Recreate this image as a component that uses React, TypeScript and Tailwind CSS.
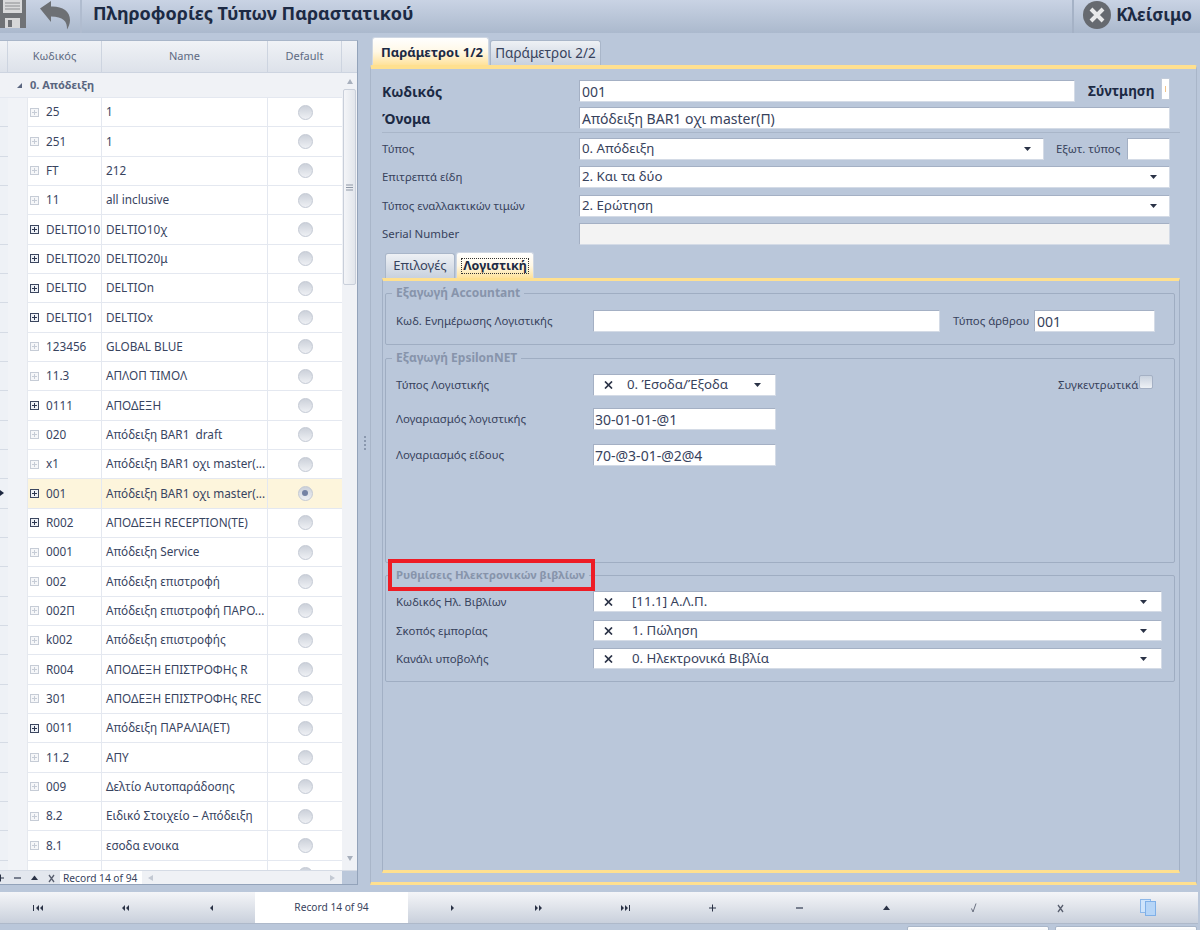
import React from "react";

const rows: [string, string, boolean][] = [
  ["25", "1", false],
  ["251", "1", false],
  ["FT", "212", false],
  ["11", "all inclusive", false],
  ["DELTIO10", "DELTIO10χ", true],
  ["DELTIO20", "DELTIO20μ", true],
  ["DELTIO", "DELTIOn", true],
  ["DELTIO1", "DELTIOx", true],
  ["123456", "GLOBAL BLUE", false],
  ["11.3", "ΑΠΛΟΠ ΤΙΜΟΛ", false],
  ["0111", "ΑΠΟΔΕΞΗ", true],
  ["020", "Απόδειξη BAR1  draft", false],
  ["x1", "Απόδειξη BAR1 οχι master(...", false],
  ["001", "Απόδειξη BAR1 οχι master(...", true],
  ["R002", "ΑΠΟΔΕΞΗ RECEPTION(ΤΕ)", true],
  ["0001", "Απόδειξη Service", false],
  ["002", "Απόδειξη επιστροφή", false],
  ["002Π", "Απόδειξη επιστροφή ΠΑΡΟ...", false],
  ["k002", "Απόδειξη επιστροφής", false],
  ["R004", "ΑΠΟΔΕΞΗ ΕΠΙΣΤΡΟΦΗς R", false],
  ["301", "ΑΠΟΔΕΞΗ ΕΠΙΣΤΡΟΦΗς REC", false],
  ["0011", "Απόδειξη ΠΑΡΑΛΙΑ(ΕΤ)", true],
  ["11.2", "ΑΠΥ", false],
  ["009", "Δελτίο Αυτοπαράδοσης", false],
  ["8.2", "Ειδικό Στοιχείο – Απόδειξη", false],
  ["8.1", "εσοδα ενοικα", false],
  ["100", "ΠΙΣΤΩΤΙΚΗ ΑΠΟΔΕΙΞΗ", false],
];

function Expander({ dark }: { dark: boolean }) {
  return (
    <svg width="9" height="9" viewBox="0 0 9 9" className="shrink-0">
      <rect x="0.5" y="0.5" width="8" height="8" fill={dark ? "#eef1f6" : "#f6f7f9"} stroke={dark ? "#3c4760" : "#c6ccd6"} />
      <path d="M2 4.5h5M4.5 2v5" stroke={dark ? "#2c3650" : "#c6ccd6"} />
    </svg>
  );
}

function Radio({ on }: { on: boolean }) {
  return (
    <span className="flex h-[15px] w-[15px] items-center justify-center rounded-full border border-[#c3c9d4] bg-gradient-to-b from-[#ccd1da] to-[#eef0f4]">
      {on && <span className="h-[6px] w-[6px] rounded-full bg-[#7482a4]" />}
    </span>
  );
}

function Row({ code, name, dark, selected }: { code: string; name: string; dark: boolean; selected: boolean }) {
  return (
    <div className="flex h-[29.33px] shrink-0">
      <div className="relative w-[8px] shrink-0 border-b border-[#d5dbe5] bg-[#eef1f6]">
        {selected && (
          <svg width="4" height="6" viewBox="0 0 4 6" className="absolute left-0 top-[11px]">
            <path d="M0 0l4 3-4 3z" fill="#1d2740" />
          </svg>
        )}
      </div>
      <div className="w-[20px] shrink-0 border-r border-[#e6e9ef] bg-[#f1f3f7]" />
      <div className={`flex flex-1 border-b border-[#e4e8f0] text-[11.75px] text-[#38445f] ${selected ? "bg-[#fdf5dc]" : "bg-white"}`}>
        <div className="flex w-[74px] shrink-0 items-center gap-[7px] border-r border-[#e4e8f0] pl-[2px]">
          <Expander dark={dark} />
          <span className="whitespace-nowrap">{code}</span>
        </div>
        <div className="flex w-[166px] shrink-0 items-center overflow-hidden whitespace-pre border-r border-[#e4e8f0] pl-[4px]">{name}</div>
        <div className="flex flex-1 items-center justify-center">
          <Radio on={selected} />
        </div>
      </div>
    </div>
  );
}

function Tri({ dir, size = 6 }: { dir: "up" | "down" | "left" | "right"; size?: number }) {
  const p = { up: "M0 6L3 1l3 5z", down: "M0 0l3 5 3-5z", left: "M5 0v6L0 3z", right: "M0 0v6l5-3z" }[dir];
  return (
    <svg width={size} height={size} viewBox="0 0 6 6">
      <path d={p} fill="currentColor" />
    </svg>
  );
}

function NavIcon({ kind }: { kind: string }) {
  const c = "#2a3246";
  const m: Record<string, React.ReactNode> = {
    first: <path d="M1 2h1v6H1zM7 2v6L4 5zM11 2v6L8 5z" fill={c} />,
    prev: <path d="M6 2v6L3 5zM10 2v6L7 5z" fill={c} />,
    back: <path d="M7 2v6L4 5z" fill={c} />,
    next: <path d="M5 2v6l3-3z" fill={c} />,
    nextp: <path d="M2 2v6l3-3zM6 2v6l3-3z" fill={c} />,
    last: <path d="M1 2v6l3-3zM5 2v6l3-3zM9 2h1v6H9z" fill={c} />,
    plus: <path d="M2 5h7M5.5 1.500v7" stroke={c} strokeWidth="1" fill="none" />,
    minus: <path d="M2 5h7" stroke="#4a5266" strokeWidth="1.400" fill="none" />,
    up: <path d="M5.500 2.500L9 7H2z" fill={c} />,
    check: <path d="M3.500 5.500L5 9 8 0.500" stroke="#6a7080" strokeWidth="1" fill="none" />,
    x: <path d="M3 2l5 7M8 2L3 9" stroke="#5a6070" strokeWidth="1.300" fill="none" />,
  };
  if (kind === "book") {
    return (
      <svg width="16" height="17" viewBox="0 0 16 17">
        <rect x="0.500" y="0.500" width="10" height="13" fill="#cfe4fb" stroke="#8db8ea" />
        <rect x="5.500" y="2.500" width="10" height="14" fill="#b6d5f7" stroke="#7fb0e8" />
      </svg>
    );
  }
  return (
    <svg width="12" height="10" viewBox="0 0 12 10">
      {m[kind]}
    </svg>
  );
}

function Input({ className, value = "" }: { className: string; value?: string }) {
  return (
    <div className={`flex h-[22px] shrink-0 items-center whitespace-nowrap border border-[#a4b0c4] border-r-[#d4dbe6] border-b-[#d4dbe6] bg-white pl-[1px] text-[14px] text-[#37425c] ${className}`}>
      {value}
    </div>
  );
}

function Caret() {
  return (
    <svg width="8" height="4" viewBox="0 0 8 4" className="ml-auto shrink-0 text-[#2a3246]">
      <path d="M0 0h7L3.500 4z" fill="currentColor" />
    </svg>
  );
}

function Combo({ value, clear, className, textPad = "pl-[19px]" }: { value: string; clear?: boolean; className: string; textPad?: string }) {
  return (
    <div className={`flex shrink-0 items-center whitespace-nowrap border border-[#a4b0c4] border-r-[#d4dbe6] border-b-[#d4dbe6] bg-white text-[13.25px] text-[#37425c] ${clear ? "pr-[13px]" : "pr-[11px]"} ${className}`}>
      {clear ? (
        <>
          <svg width="9" height="8" viewBox="0 0 9 8" className="ml-[10px] shrink-0">
            <path d="M1 0.500l7 7M8 0.500l-7 7" stroke="#2a3246" strokeWidth="1.700" />
          </svg>
          <span className={textPad}>{value}</span>
        </>
      ) : (
        <span className="pl-[2px]">{value}</span>
      )}
      <Caret />
    </div>
  );
}

function Group({ title, className, titleSize = "text-[12px]", children }: { title: string; className: string; titleSize?: string; children: React.ReactNode }) {
  return (
    <fieldset className={`rounded-[2px] border border-[#9fadc2] ${className}`}>
      <legend className={`ml-[6px] px-[4px] font-bold leading-[14px] text-[#8794ab] ${titleSize}`}>{title}</legend>
      {children}
    </fieldset>
  );
}

function Label({ children, className = "" }: { children: React.ReactNode; className?: string }) {
  return <span className={`whitespace-nowrap text-[11.4px] text-[#37425c] ${className}`}>{children}</span>;
}

export default function App() {
  return (
    <div
      className="flex h-[930px] w-[1200px] flex-col overflow-hidden bg-[#bac7da]"
      style={{ fontFamily: '"Noto Sans", "DejaVu Sans", sans-serif' }}
    >
      {/* title bar */}
      <header className="flex h-[33px] shrink-0 items-center bg-gradient-to-b from-[#c9d3e4] to-[#abb9cd]">
        <svg width="28" height="28" viewBox="0 0 28 28" className="ml-[-1px] mt-[-6px] shrink-0">
          <path d="M0 0h27v28H0z" fill="#6f7276" />
          <rect x="4" y="0" width="19" height="13" fill="#d9dadb" />
          <path d="M6 3h15M6 6h15M6 9h15" stroke="#8b8d90" />
          <rect x="6" y="18" width="15" height="10" fill="#d6d7d8" />
          <rect x="9" y="20" width="4" height="7" fill="#6f7276" />
        </svg>
        <svg width="33" height="30" viewBox="0 0 33 30" className="ml-[12px] mt-[-4px] shrink-0">
          <path d="M1 8.500L12 1v5.500C23 6 31 11 31 20c0 4-1.500 7-3 9.500 0.500-8-4-13-16-13V22z" fill="#6d7074" />
        </svg>
        <div className="ml-[8px] h-[33px] w-[2px] bg-[#b0bccf]" />
        <h1 className="ml-[11px] mt-[-7px] whitespace-nowrap text-[18px] font-bold leading-none text-[#1c2a44]">
          Πληροφορίες Τύπων Παραστατικού
        </h1>
        <div className="ml-auto h-[33px] w-[2px] bg-[#a5b2c6]" />
        <div className="ml-[9px] mt-[-3px] flex h-[28px] w-[28px] items-center justify-center rounded-full bg-[#666a70]">
          <svg width="18" height="18" viewBox="0 0 18 18">
            <path d="M3 3l12 12M15 3L3 15" stroke="#e8e9ea" strokeWidth="4" />
          </svg>
        </div>
        <span className="ml-[5px] mr-[8px] mt-[-3px] whitespace-nowrap text-[17px] font-bold text-[#1c2a44]">Κλείσιμο</span>
      </header>

      {/* main area */}
      <main className="flex h-[852px] shrink-0 pt-[7px]">
        {/* grid */}
        <section className="flex h-[845px] w-[358px] shrink-0 flex-col border-b border-r border-t border-[#93a3ba] border-t-[#a9b6c9]">
          <div className="flex h-[32px] shrink-0 border-b border-[#cdd4e0] bg-gradient-to-b from-[#f0f2f6] to-[#dde2ea] text-[11px] text-[#5e6a82]">
            <div className="w-[8px] shrink-0 border-r border-[#cdd4e0]" />
            <div className="flex w-[94px] shrink-0 items-center justify-center border-r border-[#cdd4e0]">Κωδικός</div>
            <div className="flex w-[166px] shrink-0 items-center justify-center border-r border-[#cdd4e0]">Name</div>
            <div className="flex w-[74px] shrink-0 items-center justify-center border-r border-[#cdd4e0]">Default</div>
            <div className="flex-1" />
          </div>
          <div className="flex min-h-0 flex-1">
            <div className="flex min-w-0 flex-1 flex-col overflow-hidden">
              <div className="flex h-[25px] shrink-0 items-center border-b border-[#e4e8f0] bg-[#f0f2f6] text-[11px] font-bold text-[#5a6680]">
                <span className="ml-[16px] text-[#5a6680]">
                  <svg width="7" height="7" viewBox="0 0 7 7">
                    <path d="M6 1v5H1z" fill="currentColor" />
                  </svg>
                </span>
                <span className="ml-[7px]">0. Απόδειξη</span>
              </div>
              {rows.map((r) => (
                <Row key={r[0]} code={r[0]} name={r[1]} dark={r[2]} selected={r[0] === "001"} />
              ))}
            </div>
            <div className="flex w-[15px] shrink-0 flex-col items-center bg-[#f0f2f6] text-[#a8b0bd]">
              <span className="mt-[5px] h-[9px]">
                <Tri dir="up" />
              </span>
              <div className="mt-[2px] flex h-[196px] w-[13px] items-center justify-center rounded-[2px] border border-[#c9cfda] bg-gradient-to-r from-[#f4f5f8] to-[#e2e6ec]">
                <svg width="7" height="7" viewBox="0 0 7 7">
                  <path d="M0 1h7M0 3.500h7M0 6h7" stroke="#8e97a6" />
                </svg>
              </div>
              <span className="mb-[5px] mt-auto h-[9px]">
                <Tri dir="down" />
              </span>
            </div>
          </div>
          <div className="flex h-[14px] shrink-0 items-center border-t border-[#d5dbe5] bg-[#e3e7ee] text-[#37425c]">
            <div className="ml-[-8px] flex shrink-0 items-center">
              <span className="flex w-[17px] justify-center"><NavIcon kind="plus" /></span>
              <span className="flex w-[17px] justify-center"><NavIcon kind="minus" /></span>
              <span className="flex w-[17px] justify-center"><NavIcon kind="up" /></span>
              <span className="flex w-[17px] justify-center"><NavIcon kind="x" /></span>
            </div>
            <div className="flex h-full w-[82px] shrink-0 items-center whitespace-nowrap bg-white pl-[3px] text-[10.2px] leading-[12px]">Record 14 of 94</div>
            <div className="flex h-full flex-1 items-center justify-between bg-[#eff1f5] px-[6px] text-[#c3c9d3]">
              <Tri dir="left" />
              <Tri dir="right" />
            </div>
            <div className="h-full w-[15px] shrink-0 bg-[#bac7da]" />
          </div>
        </section>

        {/* splitter */}
        <div className="flex w-[12px] shrink-0 flex-col items-center justify-center gap-[2px] pb-[40px] pl-[2px]">
          <span className="h-[2px] w-[2px] bg-[#8a98ae]" />
          <span className="h-[2px] w-[2px] bg-[#8a98ae]" />
          <span className="h-[2px] w-[2px] bg-[#8a98ae]" />
          <span className="h-[2px] w-[2px] bg-[#8a98ae]" />
        </div>

        {/* right side */}
        <section className="flex h-[845px] w-[827px] shrink-0 flex-col">
          <div className="flex h-[25px] shrink-0 items-end gap-[1px] pl-[2px]">
            <div className="relative z-10 flex h-[28px] w-[117px] items-center justify-center rounded-t-[3px] border border-b-0 border-[#cfd7e3] bg-gradient-to-b from-[#ffffff] via-[#fff8e6] to-[#ffe29a] pl-[3px] pt-[3px] text-[13px] font-bold text-[#1c2a44]">
              Παράμετροι 1/2
            </div>
            <div className="flex h-[25px] w-[111px] items-center justify-center rounded-t-[3px] border border-b-0 border-[#a9b6c9] bg-gradient-to-b from-[#eef1f5] to-[#c8d1de] text-[13.5px] text-[#37425c]">
              Παράμετροι 2/2
            </div>
          </div>
          <div className="flex min-h-0 flex-1 flex-col rounded-t-[2px] border-x border-b-[3px] border-t-[4px] border-[#a9b6c9] border-b-[#ffe08f] border-t-[#ffe08f] pl-[11px] pr-[16px]">
            <div className="flex items-center pt-[11px]">
              <span className="w-[197px] shrink-0 whitespace-nowrap text-[14px] font-bold text-[#1c2a44]">Κωδικός</span>
              <Input className="w-[496px] pl-[2px]" value="001" />
              <span className="ml-[13px] w-[73px] shrink-0 whitespace-nowrap text-[13.5px] font-bold text-[#1c2a44]">Σύντμηση</span>
              <div className="mt-[-4px] flex h-[22px] w-[9px] shrink-0 items-center justify-center border border-[#c3ccda] bg-white">
                <span className="h-[6px] w-px bg-[#f2c48a]" />
              </div>
            </div>
            <div className="mt-[5px] flex items-center">
              <span className="w-[197px] shrink-0 whitespace-nowrap text-[14px] font-bold text-[#1c2a44]">Όνομα</span>
              <Input className="w-[591px] pl-[2px]" value="Απόδειξη BAR1 οχι master(Π)" />
            </div>
            <div className="mt-[3px] h-px w-[798px] bg-[#a9b6c9]" />
            <div className="mt-[5px] flex items-center">
              <Label className="w-[197px] shrink-0">Τύπος</Label>
              <Combo className="h-[22px] w-[465px]" value="0. Απόδειξη" />
              <Label className="ml-[12px] w-[71px] shrink-0">Εξωτ. τύπος</Label>
              <Input className="w-[43px]" />
            </div>
            <div className="mt-[6px] flex items-center">
              <Label className="w-[197px] shrink-0">Επιτρεπτά είδη</Label>
              <Combo className="h-[22px] w-[591px]" value="2. Και τα δύο" />
            </div>
            <div className="mt-[7px] flex items-center">
              <Label className="w-[197px] shrink-0">Τύπος εναλλακτικών τιμών</Label>
              <Combo className="h-[22px] w-[591px]" value="2. Ερώτηση" />
            </div>
            <div className="mt-[6px] flex items-center">
              <Label className="w-[197px] shrink-0">Serial Number</Label>
              <Input className="w-[591px] !bg-[#f3f3f3]" />
            </div>

            {/* inner tabs */}
            <div className="mt-[7px] flex h-[26px] shrink-0 items-end gap-[1px] pl-[3px]">
              <div className="flex h-[25px] w-[70px] items-center justify-center rounded-t-[3px] border border-b-0 border-[#a9b6c9] bg-gradient-to-b from-[#eef1f5] to-[#c8d1de] text-[13px] text-[#37425c]">
                Επιλογές
              </div>
              <div className="flex h-[26px] w-[78px] items-center justify-center rounded-t-[3px] border border-b-0 border-[#cfd7e3] bg-gradient-to-b from-[#ffffff] via-[#fff8e6] to-[#ffe29a]">
                <span className="border border-dotted border-[#333] px-px text-[12.5px] font-bold leading-[14px] text-[#1c2a44]">Λογιστική</span>
              </div>
            </div>
            <div className="flex min-h-0 w-[798px] flex-1 flex-col border-x border-b-[3px] border-t-[3px] border-[#a2b0c5] border-b-[#ffe08f] border-t-[#ffe08f] px-[2px]">
              <Group title="Εξαγωγή Accountant" className="mt-[5px] h-[59px] w-[790px] shrink-0">
                <div className="flex items-center pl-[10px] pt-[10px]">
                  <Label className="w-[197px] shrink-0">Κωδ. Ενημέρωσης Λογιστικής</Label>
                  <Input className="w-[347px]" />
                  <Label className="ml-[13px] w-[81px] shrink-0">Τύπος άρθρου</Label>
                  <Input className="w-[121px] pl-[2px]" value="001" />
                </div>
              </Group>
              <Group title="Εξαγωγή EpsilonNET" className="mt-[6px] h-[212px] w-[790px] shrink-0">
                <div className="flex items-center pl-[10px] pt-[9px]">
                  <Label className="w-[197px] shrink-0">Τύπος Λογιστικής</Label>
                  <Combo className="h-[22px] w-[183px]" clear textPad="pl-[14px]" value="0. Έσοδα/Έξοδα" />
                  <Label className="ml-[282px]">Συγκεντρωτικά</Label>
                  <div className="ml-[1px] mt-[-6px] h-[14px] w-[14px] rounded-[2px] border border-[#a4b0c4] bg-gradient-to-b from-[#c9d2df] to-[#eef1f5]" />
                </div>
                <div className="mt-[12px] flex items-center pl-[10px]">
                  <Label className="w-[197px] shrink-0">Λογαριασμός λογιστικής</Label>
                  <Input className="w-[183px]" value="30-01-01-@1" />
                </div>
                <div className="mt-[14px] flex items-center pl-[10px]">
                  <Label className="w-[197px] shrink-0">Λογαριασμός είδους</Label>
                  <Input className="w-[183px]" value="70-@3-01-@2@4" />
                </div>
              </Group>
              <div className="relative mt-[5px] shrink-0">
                <Group title="Ρυθμίσεις Ηλεκτρονικών βιβλίων" titleSize="text-[11.3px]" className="h-[114px] w-[790px]">
                  <div className="flex items-center pl-[10px] pt-[9px]">
                    <Label className="w-[197px] shrink-0">Κωδικός Ηλ. Βιβλίων</Label>
                    <Combo className="h-[21px] w-[569px]" clear value="[11.1] Α.Λ.Π." />
                  </div>
                  <div className="mt-[8px] flex items-center pl-[10px]">
                    <Label className="w-[197px] shrink-0">Σκοπός εμπορίας</Label>
                    <Combo className="h-[21px] w-[569px]" clear value="1. Πώληση" />
                  </div>
                  <div className="mt-[7px] flex items-center pl-[10px]">
                    <Label className="w-[197px] shrink-0">Κανάλι υποβολής</Label>
                    <Combo className="h-[21px] w-[569px]" clear value="0. Ηλεκτρονικά Βιβλία" />
                  </div>
                </Group>
                <div className="absolute left-[3px] top-[-9px] h-[32px] w-[207px] border-[4px] border-[#ee1c25]" />
              </div>
            </div>
            <div className="h-[9px] shrink-0" />
          </div>
        </section>
      </main>

      {/* record navigator */}
      <nav className="mt-[7px] flex h-[32px] w-[1198px] shrink-0 border-b border-[#aeb9ca] bg-gradient-to-b from-[#f4f5f8] via-[#dfe3ea] to-[#c9d0dc]">
        <div className="ml-[-6px] flex">
          {["first", "prev", "back"].map((k) => (
            <div key={k} className="flex w-[87px] items-center justify-center">
              <NavIcon kind={k} />
            </div>
          ))}
        </div>
        <div className="flex w-[153px] shrink-0 items-center justify-center bg-white text-[10.2px] text-[#37425c]">Record 14 of 94</div>
        {["next", "nextp", "last", "plus", "minus", "up", "check", "x", "book"].map((k) => (
          <div key={k} className="flex w-[87px] shrink-0 items-center justify-center">
            <NavIcon kind={k} />
          </div>
        ))}
      </nav>

      {/* clipped buttons */}
      <div className="mt-[2px] flex justify-end gap-[6px] pr-[3px]">
        <div className="h-[10px] w-[142px] shrink-0 rounded-t-[2px] border border-[#a9b6c9] bg-gradient-to-b from-[#ffffff] to-[#e8ebf0]" />
        <div className="h-[10px] w-[142px] shrink-0 rounded-t-[2px] border border-[#a9b6c9] bg-gradient-to-b from-[#ffffff] to-[#e8ebf0]" />
      </div>
    </div>
  );
}
